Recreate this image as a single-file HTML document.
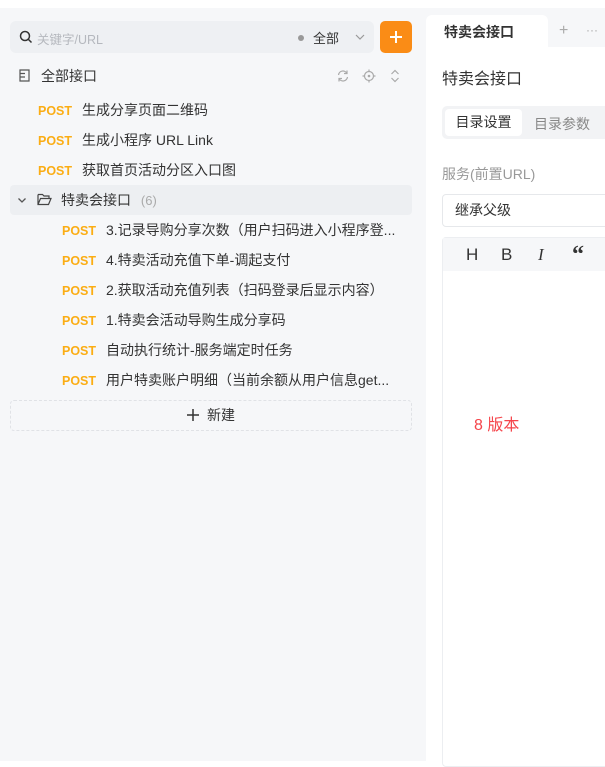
<!DOCTYPE html>
<html><head><meta charset="utf-8"><style>
*{margin:0;padding:0;box-sizing:border-box}
body{width:605px;height:761px;overflow:hidden;background:#fff;font-family:"Liberation Sans","Noto Sans CJK SC",sans-serif;font-size:14px;color:#333;position:relative}
.abs{position:absolute}
#left{left:0;top:8px;width:426px;height:753px;background:#f6f7f9}
.search{left:10px;top:13px;width:364px;height:32px;background:#eef0f3;border-radius:6px}
.add{left:380px;top:13px;width:32px;height:32px;background:#fa8c16;border-radius:5px;color:#fff}
.row{position:absolute;left:0;height:30px;line-height:30px;font-size:14px;color:#333;white-space:nowrap}
.post{color:#fbad14;font-weight:bold;font-size:12.5px;display:inline-block;width:44px}
#right{left:426px;top:8px;width:179px;height:753px;background:#fff}
</style></head><body>
<div class="abs" style="left:0;top:0;width:605px;height:8px;background:#fff"></div>
<div id="left" class="abs">
  <div class="abs search">
    <svg class="abs" style="left:9px;top:9px" width="14" height="14" viewBox="0 0 14 14"><circle cx="6" cy="6" r="4.5" fill="none" stroke="#333" stroke-width="1.5"/><path d="M9.5 9.5L12.5 12.5" stroke="#333" stroke-width="1.5"/></svg>
    <span class="abs" style="left:27px;top:8px;font-size:12.5px;color:#b5b8be">关键字/URL</span>
    <span class="abs" style="left:288px;top:14px;width:6px;height:6px;border-radius:50%;background:#999"></span>
    <span class="abs" style="left:303px;top:7px;font-size:13px;color:#333">全部</span>
    <svg class="abs" style="left:345px;top:12px" width="10" height="8" viewBox="0 0 10 8"><path d="M1 2L5 6L9 2" fill="none" stroke="#999" stroke-width="1.2"/></svg>
  </div>
  <div class="abs add"><svg class="abs" style="left:9px;top:9px" width="14" height="14"><path d="M7 1V13M1 7H13" stroke="#fff" stroke-width="2"/></svg></div>
  <svg class="abs" style="left:19px;top:61px" width="11" height="13" viewBox="0 0 11 13"><path d="M1 1H10V12H1Z M1 4.5H6 M1 8H6" fill="none" stroke="#555" stroke-width="1.2"/></svg>
  <span class="abs" style="left:41px;top:58px;font-size:14px;color:#333">全部接口</span>
  <svg class="abs" style="left:336px;top:61px" width="14" height="14" viewBox="0 0 14 14"><path d="M2.5 6A4.5 4.5 0 0 1 11 4.5M11.5 8A4.5 4.5 0 0 1 3 9.5M11 1.5V4.5H8M3 12.5V9.5H6" fill="none" stroke="#aaa" stroke-width="1.2"/></svg>
  <svg class="abs" style="left:362px;top:61px" width="14" height="14" viewBox="0 0 14 14"><circle cx="7" cy="7" r="4.5" fill="none" stroke="#aaa" stroke-width="1.2"/><circle cx="7" cy="7" r="1.3" fill="#aaa"/><path d="M7 0.5V2.5M7 11.5V13.5M0.5 7H2.5M11.5 7H13.5" stroke="#aaa" stroke-width="1.2"/></svg>
  <svg class="abs" style="left:390px;top:61px" width="10" height="14" viewBox="0 0 10 14"><path d="M1.5 5L5 1.5L8.5 5M1.5 9L5 12.5L8.5 9" fill="none" stroke="#aaa" stroke-width="1.2"/></svg>
  <div class="row" style="left:38px;top:87px"><span class="post">POST</span>生成分享页面二维码</div>
  <div class="row" style="left:38px;top:117px"><span class="post">POST</span>生成小程序 URL Link</div>
  <div class="row" style="left:38px;top:147px"><span class="post">POST</span>获取首页活动分区入口图</div>
  <div class="abs" style="left:10px;top:177px;width:402px;height:30px;background:#edeff2;border-radius:4px"></div>
  <svg class="abs" style="left:17px;top:189px" width="10" height="7" viewBox="0 0 10 7"><path d="M1.5 1.5L5 5L8.5 1.5" fill="none" stroke="#555" stroke-width="1.3"/></svg>
  <svg class="abs" style="left:37px;top:185px" width="15" height="13" viewBox="0 0 15 13"><path d="M1 1.5H5.5L7 3H12V5.5M1 1.5V11.5H11.5L14 5.5H3.5L1 11.5" fill="none" stroke="#444" stroke-width="1.2"/></svg>
  <div class="row" style="left:61px;top:177px">特卖会接口 <span style="color:#aaa;font-size:13px;margin-left:6px">(6)</span></div>
  <div class="row" style="left:62px;top:207px"><span class="post">POST</span>3.记录导购分享次数（用户扫码进入小程序登...</div>
  <div class="row" style="left:62px;top:237px"><span class="post">POST</span>4.特卖活动充值下单-调起支付</div>
  <div class="row" style="left:62px;top:267px"><span class="post">POST</span>2.获取活动充值列表（扫码登录后显示内容）</div>
  <div class="row" style="left:62px;top:297px"><span class="post">POST</span>1.特卖会活动导购生成分享码</div>
  <div class="row" style="left:62px;top:327px"><span class="post">POST</span>自动执行统计-服务端定时任务</div>
  <div class="row" style="left:62px;top:357px"><span class="post">POST</span>用户特卖账户明细（当前余额从用户信息get...</div>
  <div class="abs" style="left:10px;top:392px;width:402px;height:31px;border:1px dashed #e0e2e6;border-radius:4px;text-align:center;line-height:29px;color:#333">
    <svg style="vertical-align:-1px;margin-right:8px" width="12" height="12"><path d="M6 0V12M0 6H12" stroke="#333" stroke-width="1.5"/></svg>新建</div>
</div>
<div id="right" class="abs">
  <div class="abs" style="left:0;top:0;width:179px;height:39px;background:#f6f7f9"></div>
  <div class="abs" style="left:0;top:7px;width:122px;height:32px;background:#fff;border-radius:6px 6px 0 0"></div>
  <span class="abs" style="left:18px;top:14px;font-size:14px;font-weight:bold;color:#333">特卖会接口</span>
  <span class="abs" style="left:133px;top:14px;font-size:16px;color:#aaa">+</span>
  <span class="abs" style="left:160px;top:15px;font-size:12px;color:#aaa">···</span>
  <span class="abs" style="left:16px;top:57px;font-size:16px;color:#333">特卖会接口</span>
  <div class="abs" style="left:16px;top:98px;width:170px;height:33px;background:#f2f3f5;border-radius:5px"></div>
  <div class="abs" style="left:19px;top:101px;width:77px;height:27px;background:#fff;border-radius:4px;text-align:center;line-height:27px;color:#333">目录设置</div>
  <span class="abs" style="left:108px;top:106px;color:#888">目录参数</span>
  <span class="abs" style="left:16px;top:156px;color:#999">服务(前置URL)</span>
  <div class="abs" style="left:16px;top:186px;width:170px;height:33px;border:1px solid #e6e8eb;border-radius:4px;padding-left:12px;line-height:31px;color:#333">继承父级</div>
  <div class="abs" style="left:16px;top:229px;width:170px;height:530px;border:1px solid #eceef1;border-radius:4px"></div>
  <div class="abs" style="left:17px;top:230px;width:170px;height:33px;background:#f6f7f9"></div>
  <span class="abs" style="left:40px;top:237px;font-size:17px;color:#333">H</span>
  <span class="abs" style="left:75px;top:237px;font-size:17px;color:#333">B</span>
  <span class="abs" style="left:112px;top:237px;font-size:17px;color:#333;font-style:italic;font-family:'Liberation Serif',serif">I</span>
  <span class="abs" style="left:146px;top:234px;font-size:24px;color:#333;font-weight:bold;font-family:'Liberation Serif',serif">“</span>
  <span class="abs" style="left:48px;top:403px;font-size:16px;color:#f5454b">8 版本</span>
</div>
</body></html>
